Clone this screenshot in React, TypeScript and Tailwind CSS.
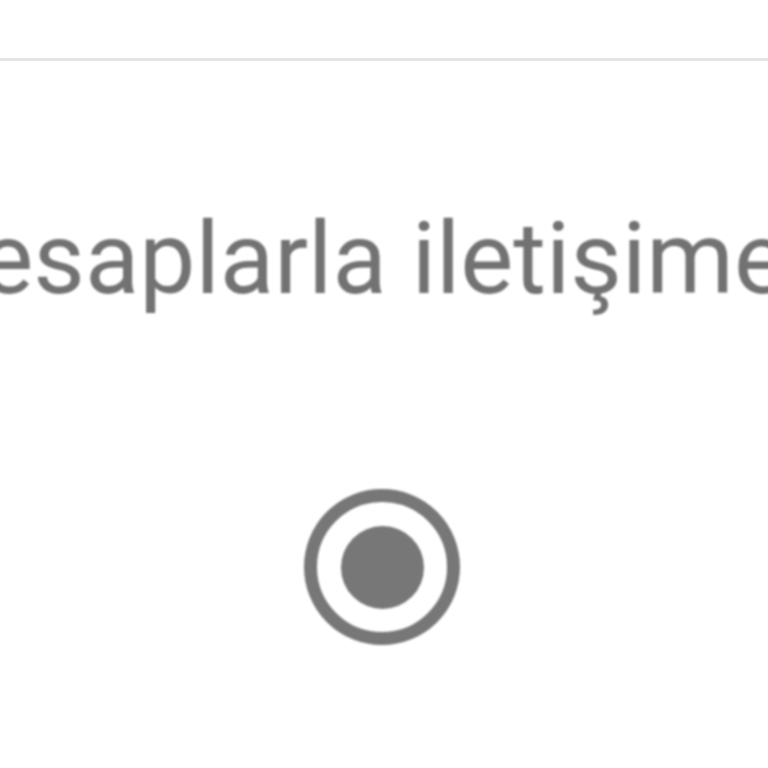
import React from 'react';

export default function App() {
  return (
    <div className="w-[768px] h-[768px] overflow-hidden bg-white" style={{ fontFamily: 'Roboto, "Noto Sans", sans-serif' }}>
      <div className="h-[61px] border-b-[3px] border-[#e4e4e4] blur-[0.6px]" />
      <div className="mt-[148px] h-[100px] overflow-visible whitespace-nowrap text-[100px] leading-[100px] text-[#727272] blur-[0.8px]">
        <span className="inline-block ml-[-91px]">Hesaplarla iletişime geçin</span>
      </div>
      <div className="mt-[180px] flex justify-center">
        <div className="mr-[4px] flex h-[156px] w-[156px] items-center justify-center rounded-full border-[13px] border-[#777777] blur-[0.8px]">
          <div className="h-[83px] w-[83px] rounded-full bg-[#777777]" />
        </div>
      </div>
    </div>
  );
}
